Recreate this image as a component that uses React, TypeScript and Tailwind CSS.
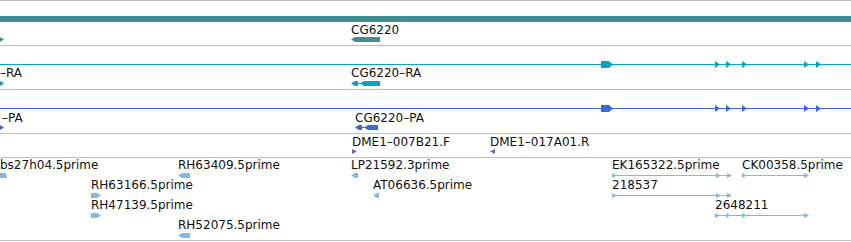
import React from 'react';

const TEAL = '#408e91';
const CYAN = '#0e9fc4';
const BLUE = '#356ed0';
const PURPLE = '#7a5cc4';
const EST = '#84b9df';

type Label = { x: number; y: number; text: string };

const Labels: React.FC<{ items: Label[] }> = ({ items }) => (
    <>
        {items.map((l, i) => (
            <span key={i} className="absolute whitespace-nowrap leading-[14px]" style={{ left: l.x, top: l.y }}>
                {l.text}
            </span>
        ))}
    </>
);

// arrow heads sitting on a transcript line
const heads = (xs: number[], top: number, w: number, h: number, fill: string) =>
    xs.map((x) => <polygon key={x} points={`${x},${top} ${x + w},${top + h / 2} ${x},${top + h}`} fill={fill} />);

// EST with connecting line and arrow heads
const Span: React.FC<{ from: number; to: number; row: number; marks: number[] }> = ({ from, to, row, marks }) => {
    const top = 15 + row * 20;
    return (
        <g>
            <rect x={from} y={top + 2} width={to - from} height={1} fill={EST} />
            {heads(marks, top, 5, 5, EST)}
        </g>
    );
};

const leftBox = (x1: number, x2: number, top: number, fill: string) => (
    <polygon points={`${x1},${top + 2.5} ${x1 + 4},${top} ${x2},${top} ${x2},${top + 5} ${x1 + 4},${top + 5}`} fill={fill} />
);
const rightBox = (x1: number, x2: number, top: number, fill: string) => (
    <polygon points={`${x1},${top} ${x2 - 4},${top} ${x2},${top + 2.5} ${x2 - 4},${top + 5} ${x1},${top + 5}`} fill={fill} />
);

const Transcript: React.FC<{ color: string }> = ({ color }) => (
    <svg className="absolute left-0 top-0" width={851} height={43}>
        <rect x={0} y={18} width={851} height={1} fill={color} />
        <polygon points="601,15 609,15 613,18.5 609,22 601,22" fill={color} />
        {heads([715, 726, 742, 804, 816], 15, 5, 7, color)}
        {rightBox(0, 4, 35, color)}
    </svg>
);

export default function App() {
    return (
        <div className="w-[851px] h-[242px] overflow-hidden bg-white text-[12px] text-[#111] font-['DejaVu_Sans',sans-serif]">
            <div className="border-t border-[#c0c0c0]">
                {/* gene track */}
                <div className="relative h-[45px] border-b border-[#c0c0c0]">
                    <svg className="absolute left-0 top-0" width={851} height={44}>
                        <rect x={0} y={15} width={851} height={6} fill={TEAL} />
                        {leftBox(351, 380, 36, TEAL)}
                        {rightBox(0, 4, 36, TEAL)}
                    </svg>
                    <Labels items={[{ x: 351, y: 22, text: 'CG6220' }]} />
                </div>

                {/* RA transcripts */}
                <div className="relative h-[44px] border-b border-[#c0c0c0]">
                    <Transcript color={CYAN} />
                    <svg className="absolute left-0 top-0" width={851} height={43}>
                        {leftBox(351, 358, 35, CYAN)}
                        <rect x={358} y={37} width={4} height={1} fill={CYAN} />
                        {leftBox(360, 380, 35, CYAN)}
                    </svg>
                    <Labels
                        items={[
                            { x: 0, y: 20, text: '–RA' },
                            { x: 351, y: 20, text: 'CG6220–RA' },
                        ]}
                    />
                </div>

                {/* PA proteins */}
                <div className="relative h-[44px] border-b border-[#c0c0c0]">
                    <Transcript color={BLUE} />
                    <svg className="absolute left-0 top-0" width={851} height={43}>
                        {leftBox(355, 362, 35, BLUE)}
                        <rect x={362} y={37} width={3} height={1} fill={BLUE} />
                        {leftBox(364, 378, 35, BLUE)}
                    </svg>
                    <Labels
                        items={[
                            { x: 2, y: 21, text: '–PA' },
                            { x: 355, y: 21, text: 'CG6220–PA' },
                        ]}
                    />
                </div>

                {/* BAC ends */}
                <div className="relative h-[24px] border-b border-[#c0c0c0]">
                    <svg className="absolute left-0 top-0" width={851} height={23}>
                        <polygon points="352,15 357,17.5 352,20" fill={PURPLE} />
                        <polygon points="495,15 490,17.5 495,20" fill={PURPLE} />
                    </svg>
                    <Labels
                        items={[
                            { x: 352, y: 1, text: 'DME1–007B21.F' },
                            { x: 490, y: 1, text: 'DME1–017A01.R' },
                        ]}
                    />
                </div>

                {/* ESTs */}
                <div className="relative h-[83px] border-b border-[#c0c0c0]">
                    <svg className="absolute left-0 top-0" width={851} height={82}>
                        <polygon points="0,15 5,15 7,17.5 7,20 0,20" fill={EST} />
                        {leftBox(178, 190, 15, EST)}
                        {leftBox(351, 358, 15, EST)}
                        <Span from={612} to={731} row={0} marks={[612, 716, 727]} />
                        <Span from={742} to={808} row={0} marks={[742, 804]} />
                        {rightBox(91, 101, 35, EST)}
                        {leftBox(373, 379, 35, EST)}
                        <Span from={612} to={731} row={1} marks={[612, 716, 727]} />
                        {rightBox(91, 101, 55, EST)}
                        <Span from={715} to={808} row={2} marks={[715, 726, 742, 804]} />
                        {leftBox(178, 190, 75, EST)}
                    </svg>
                    <Labels
                        items={[
                            { x: 0, y: 0, text: 'bs27h04.5prime' },
                            { x: 178, y: 0, text: 'RH63409.5prime' },
                            { x: 351, y: 0, text: 'LP21592.3prime' },
                            { x: 612, y: 0, text: 'EK165322.5prime' },
                            { x: 742, y: 0, text: 'CK00358.5prime' },
                            { x: 91, y: 20, text: 'RH63166.5prime' },
                            { x: 373, y: 20, text: 'AT06636.5prime' },
                            { x: 612, y: 20, text: '218537' },
                            { x: 91, y: 40, text: 'RH47139.5prime' },
                            { x: 715, y: 40, text: '2648211' },
                            { x: 178, y: 60, text: 'RH52075.5prime' },
                        ]}
                    />
                </div>
            </div>
        </div>
    );
}
